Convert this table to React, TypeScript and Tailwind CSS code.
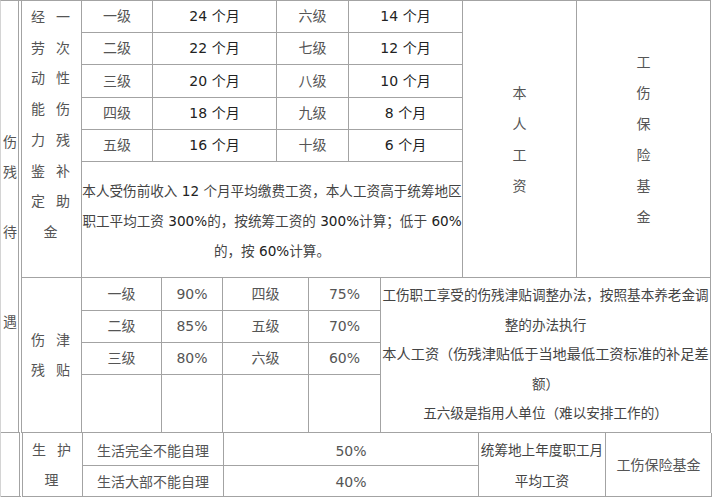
const cell =
  "flex items-center justify-center border-r border-b border-[#a3a3a3] text-[14px] text-[#555]";

const oneOff = [
  ["一级", "24", "六级", "14"],
  ["二级", "22", "七级", "12"],
  ["三级", "20", "八级", "10"],
  ["四级", "18", "九级", "8"],
  ["五级", "16", "十级", "6"],
];

const allowance = [
  ["一级", "90%", "四级", "75%"],
  ["二级", "85%", "五级", "70%"],
  ["三级", "80%", "六级", "60%"],
];

function Pairs({ rows, className }: { rows: string[][]; className: string }) {
  return (
    <div className={className}>
      {rows.map((r, i) => (
        <div key={i} className="flex justify-center gap-[11px]">
          {r.map((c, j) => (
            <span key={j}>{c}</span>
          ))}
        </div>
      ))}
    </div>
  );
}

function Stack({ chars, className }: { chars: string[]; className: string }) {
  return (
    <div className={className}>
      {chars.map((c, i) => (
        <div key={i} className="h-[31px] leading-[31px] text-center">
          {c}
        </div>
      ))}
    </div>
  );
}

function TopSection() {
  return (
    <div className="grid grid-cols-[60px_71px_124px_72px_114px_114px_134px] grid-rows-[32px_32px_33px_32px_32px_116px]">
      <div className="row-span-6 border-r border-b border-[#a3a3a3] text-[14px] text-[#555] pt-[1px] pr-[2px]">
        <Pairs
          className="leading-[30.7px]"
          rows={[
            ["经", "一"],
            ["劳", "次"],
            ["动", "性"],
            ["能", "伤"],
            ["力", "残"],
            ["鉴", "补"],
            ["定", "助"],
            ["金"],
          ]}
        />
      </div>
      {oneOff.map((r, i) => (
        <div key={i} className="contents">
          <div className={cell}>{r[0]}</div>
          <div className={cell}>
            <span className="text-[#222]">{r[1]} 个月</span>
          </div>
          <div className={cell}>{r[2]}</div>
          <div className={cell}>
            <span className="text-[#222]">{r[3]} 个月</span>
          </div>
          {i === 0 && (
            <>
              <div className={`${cell} row-span-6`}>
                <Stack chars={["本", "人", "工", "资"]} className="pt-[2px]" />
              </div>
              <div className={`${cell} row-span-6`}>
                <Stack
                  chars={["工", "伤", "保", "险", "基", "金"]}
                  className="pt-[2px]"
                />
              </div>
            </>
          )}
        </div>
      ))}
      <div className="col-span-4 border-r border-b border-[#a3a3a3] flex flex-col justify-center text-center text-[13.6px] leading-[30px] text-[#444] whitespace-nowrap pt-[2px]">
        <div>
          本人受伤前收入 <span className="text-[#222]">12</span> 个月平均缴费工资，本人工资高于统筹地区
        </div>
        <div>
          职工平均工资 <span className="text-[#222]">300%</span>的，按统筹工资的{" "}
          <span className="text-[#222]">300%</span>计算；低于{" "}
          <span className="text-[#222]">60%</span>
        </div>
        <div>
          的，按 <span className="text-[#222]">60%</span>计算。
        </div>
      </div>
    </div>
  );
}

function MiddleSection() {
  return (
    <div className="grid grid-cols-[60px_80px_61px_86px_72px_330px] grid-rows-[33px_32px_32px_58px]">
      <div className={`${cell} row-span-4 pr-[2px]`}>
        <Pairs
          className="leading-[30px]"
          rows={[
            ["伤", "津"],
            ["残", "贴"],
          ]}
        />
      </div>
      {allowance.map((r, i) => (
        <div key={i} className="contents">
          <div className={cell}>{r[0]}</div>
          <div className={`${cell} text-[#222]`}>{r[1]}</div>
          <div className={cell}>{r[2]}</div>
          <div className={`${cell} text-[#222]`}>{r[3]}</div>
          {i === 0 && (
            <div className="row-span-4 border-r border-b border-[#a3a3a3] flex flex-col justify-center text-center text-[13.6px] leading-[29.5px] text-[#444] whitespace-nowrap">
              <div>工伤职工享受的伤残津贴调整办法，按照基本养老金调</div>
              <div>整的办法执行</div>
              <div className="text-[14.2px]">本人工资（伤残津贴低于当地最低工资标准的补足差</div>
              <div>额）</div>
              <div>五六级是指用人单位（难以安排工作的）</div>
            </div>
          )}
        </div>
      ))}
      <div className={cell}></div>
      <div className={cell}></div>
      <div className={cell}></div>
      <div className={cell}></div>
    </div>
  );
}

function BottomSection() {
  return (
    <div className="grid grid-cols-[22px_60px_141px_255px_127px_106px] grid-rows-[33px_31px]">
      <div className="row-span-2 border-r-[4px] border-double border-b border-[#a3a3a3]"></div>
      <div className={`${cell} row-span-2 pr-[2px] pt-[1px]`}>
        <Pairs
          className="leading-[30px]"
          rows={[["生", "护"], ["理"]]}
        />
      </div>
      <div className={`${cell} pt-[4px]`}>生活完全不能自理</div>
      <div className={`${cell} text-[#222] pt-[4px]`}>50%</div>
      <div className="row-span-2 border-r border-b border-[#a3a3a3] flex flex-col justify-center text-center text-[13.6px] leading-[31px] text-[#444] whitespace-nowrap pt-[3px]">
        <div>统筹地上年度职工月</div>
        <div>平均工资</div>
      </div>
      <div className={`${cell} row-span-2 pt-[2px]`}>工伤保险基金</div>
      <div className={`${cell} pt-[2px]`}>生活大部不能自理</div>
      <div className={`${cell} text-[#222] pt-[2px]`}>40%</div>
    </div>
  );
}

export default function App() {
  return (
    <div className="w-[713px] h-[500px] bg-white overflow-hidden font-['DejaVu_Sans','Noto_Sans_CJK_SC',sans-serif]">
      <div className="w-[711px] border-t border-l border-t-[#a3a3a3] border-l-[#d4d4d4]">
        <div className="flex">
          <div className="w-[22px] h-[432px] border-r-[4px] border-double border-b border-[#a3a3a3] text-[14px] text-[#555] pt-[126px] pl-[1px]">
            {["伤", "残", "", "待", "", "", "遇"].map((c, i) => (
              <div key={i} className="h-[30px] leading-[30px] text-center">
                {c}
              </div>
            ))}
          </div>
          <div className="flex flex-col">
            <TopSection />
            <MiddleSection />
          </div>
        </div>
        <BottomSection />
      </div>
    </div>
  );
}
